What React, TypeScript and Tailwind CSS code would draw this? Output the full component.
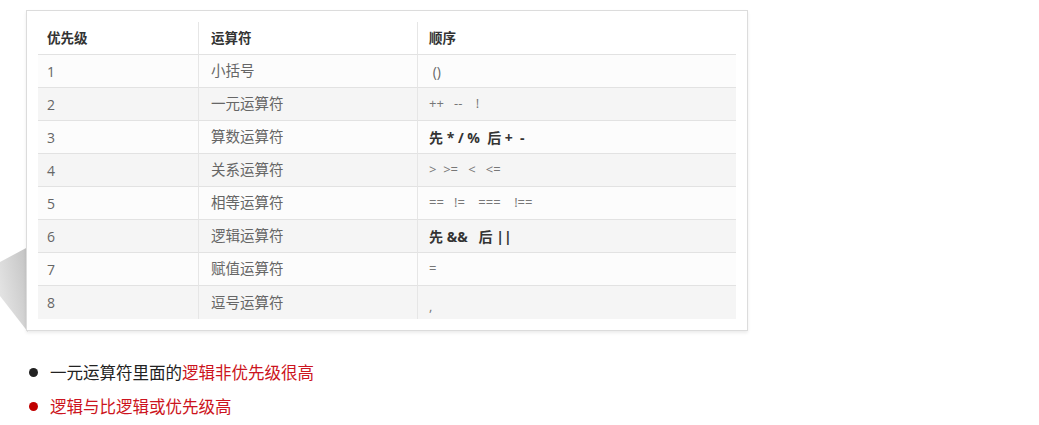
const ROWS: { p: string; op: string; order: string; bold?: boolean; small?: boolean }[] = [
  { p: '1', op: '小括号', order: ' ()' },
  { p: '2', op: '一元运算符', order: '++   --    !', small: true },
  { p: '3', op: '算数运算符', order: '先 * / %  后 +  -', bold: true },
  { p: '4', op: '关系运算符', order: '>  >=   <   <=', small: true },
  { p: '5', op: '相等运算符', order: '==   !=    ===    !==', small: true },
  { p: '6', op: '逻辑运算符', order: '先 &&   后 ||', bold: true },
  { p: '7', op: '赋值运算符', order: '=', small: true },
  { p: '8', op: '逗号运算符', order: ',', small: true },
]

const FONT = "font-['Open_Sans','Noto_Sans_CJK_SC',sans-serif]"

export default function App() {
  return (
    <div className={`relative w-[1039px] h-[425px] bg-white ${FONT}`}>
      {/* diagonal shadow behind card */}
      <svg className="absolute left-0 top-[240px]" width="28" height="95" viewBox="0 0 28 95">
        <defs>
          <linearGradient id="sh" x1="1" y1="0" x2="0" y2="0.6">
            <stop offset="0" stopColor="#c2c2c2" />
            <stop offset="1" stopColor="#e4e4e4" />
          </linearGradient>
        </defs>
        <polygon points="0,22 28,7 28,92 0,56" fill="url(#sh)" />
      </svg>

      <div className="relative pl-[26px] pt-[10px]">
        <div className="w-[722px] border border-[#dcdcdc] bg-white pt-[11px] pl-[11px] pr-[10px] pb-[11px] shadow-[0_2px_3px_rgba(0,0,0,0.08)]">
          <div className="grid grid-cols-[161px_219px_318px]">
            <div className="h-[33px] flex items-center pl-[9px] text-[13.5px] font-bold text-[#333] border-b border-[#e2e2e2] border-r border-r-[#e6e6e6]">优先级</div>
            <div className="h-[33px] flex items-center pl-[12px] text-[13.5px] font-bold text-[#333] border-b border-[#e2e2e2] border-r border-r-[#e6e6e6]">运算符</div>
            <div className="h-[33px] flex items-center pl-[11px] text-[13.5px] font-bold text-[#333] border-b border-[#e2e2e2]">顺序</div>
            {ROWS.map((r, i) => {
              const bg = i % 2 === 0 ? 'bg-[#fcfcfc]' : 'bg-[#f5f5f5]'
              const last = i === ROWS.length - 1
              const bb = last ? '' : 'border-b border-[#e2e2e2]'
              return [
                <div key={r.p + 'a'} className={`h-[33px] flex items-center pl-[9px] text-[14px] text-[#666] ${bg} ${bb} border-r border-r-[#e6e6e6]`}>{r.p}</div>,
                <div key={r.p + 'b'} className={`h-[33px] flex items-center pl-[12px] text-[14.5px] text-[#666] ${bg} ${bb} border-r border-r-[#e6e6e6]`}>{r.op}</div>,
                <div
                  key={r.p + 'c'}
                  className={`h-[33px] flex items-center pl-[11px] whitespace-pre ${bg} ${bb} ${
                    r.bold ? 'text-[14px] font-bold text-[#333]' : r.small ? 'text-[13px] text-[#777]' : 'text-[14px] text-[#666]'
                  } ${r.order === ',' ? 'pt-[8px]' : ''}`}
                >
                  {r.order}
                </div>,
              ]
            })}
          </div>
        </div>
      </div>

      <div className="pl-[29px] mt-[29px] flex flex-col gap-[10px] text-[16.5px] font-['Noto_Sans_CJK_SC',sans-serif]">
        <div className="flex items-center h-[24px]">
          <span className="w-[9px] h-[9px] rounded-full bg-[#222] mr-[12px]" />
          <span className="text-[#222]">一元运算符里面的</span>
          <span className="text-[#cc1420]">逻辑非优先级很高</span>
        </div>
        <div className="flex items-center h-[24px]">
          <span className="w-[9px] h-[9px] rounded-full bg-[#c00000] mr-[12px]" />
          <span className="text-[#cc1420]">逻辑与比逻辑或优先级高</span>
        </div>
      </div>
    </div>
  )
}
